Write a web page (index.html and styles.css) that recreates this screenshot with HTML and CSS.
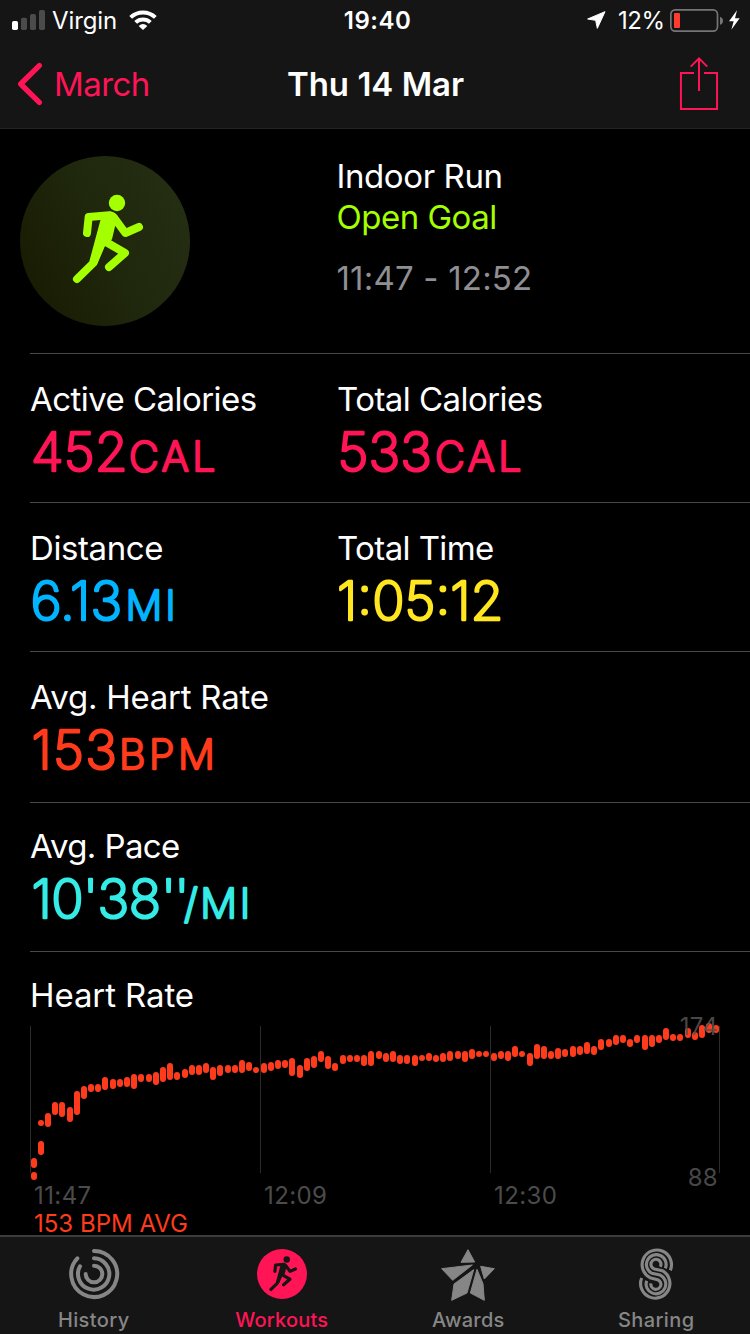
FILE: index.html
```html
<!DOCTYPE html>
<html lang="en">
<head>
<meta charset="utf-8">
<title>Workout</title>
<link rel="stylesheet" href="styles.css">
</head>
<body>
<svg class="defs" width="0" height="0">
  <symbol id="runner" viewBox="60 48 510 510">
    <circle cx="351" cy="189" r="24.5" fill="currentColor"/>
    <path d="M302 238L268 364L290 376L313 320L336 298L346 256L352 234L330 214Z" fill="currentColor"/>
    <path d="M261 279L266 231L328 226Q336 226 343 234L376 279L417 261M231 417L280 369L305 310M318 306L375 339L327 381" fill="none" stroke="currentColor" stroke-width="24" stroke-linecap="round" stroke-linejoin="round"/>
  </symbol>
</svg>
<div class="screen">
  <header class="header">
    <div class="status">
      <div class="status-left">
        <svg class="signal" viewBox="36 30 99 60"><rect x="36" y="63" width="18" height="27" rx="5" fill="#fff"/><g fill="#4b4b4b"><rect x="63" y="53" width="18" height="37" rx="5"/><rect x="90" y="42" width="18" height="48" rx="5"/><rect x="117" y="30" width="18" height="60" rx="5"/></g></svg>
        <span class="carrier">Virgin</span>
        <svg class="wifi" viewBox="387 30 84 60"><path d="M392 52A53.500 53.500 0 0 1 466 52M407 67A32 32 0 0 1 451 67" fill="none" stroke="#fff" stroke-width="12"/><path d="M429 90L416 78Q429 66 442 78Z" fill="#fff"/></svg>
      </div>
      <span class="clock">19:40</span>
      <div class="status-right">
        <svg class="location" viewBox="261 36 57 54"><path d="M263 60L315 38L292 88L287 64Z" fill="#fff" stroke="#fff" stroke-width="3" stroke-linejoin="round"/></svg>
        <span class="percent">12%</span>
        <svg class="battery" viewBox="510 27 210 69"><rect x="512.500" y="29.500" width="140" height="64" rx="13" fill="none" stroke="#757575" stroke-width="5"/><rect x="522" y="39" width="18" height="45" rx="3" fill="#ff3b30"/><path d="M660 50Q669 53 669 62Q669 71 660 74Z" fill="#757575"/><path d="M711 31L687 64H701L694 89L719 55H705Z" fill="#fff"/></svg>
      </div>
    </div>
    <nav class="nav">
      <a class="back"><svg class="chevron" viewBox="51 186 78 132"><path d="M118 197L62 252L118 307" fill="none" stroke="currentColor" stroke-width="16" stroke-linecap="round" stroke-linejoin="round"/></svg><span class="back-text">March</span></a>
      <h1 class="title">Thu 14 Mar</h1>
      <svg class="share" viewBox="540 170 114 160"><path d="M582 218.500H542.500V327H651.500V218.500H612M597 175V273M572 199L597 174L622 199" fill="none" stroke="currentColor" stroke-width="6"/></svg>
    </nav>
  </header>

  <main class="content">
    <section class="hero">
      <div class="badge"><svg class="badge-icon"><use href="#runner"/></svg></div>
      <div class="summary">
        <div class="label indoor">Indoor Run</div>
        <div class="label goal">Open Goal</div>
        <div class="label period">11:47 - 12:52</div>
      </div>
    </section>
    <section class="row">
      <div><div class="label l-active">Active Calories</div><svg class="value pink"><text y="53.500"><tspan x="1">452</tspan><tspan class="unit" x="99">CAL</tspan></text></svg></div>
      <div><div class="label l-total">Total Calories</div><svg class="value pink"><text y="53.500"><tspan x="0.500">533</tspan><tspan class="unit" x="98">CAL</tspan></text></svg></div>
    </section>
    <section class="row">
      <div><div class="label l-distance">Distance</div><svg class="value blue"><text y="53.500"><tspan x="0.500">6.13</tspan><tspan class="unit" x="95.500">MI</tspan></text></svg></div>
      <div><div class="label l-time">Total Time</div><svg class="value yellow"><text y="53.500"><tspan x="0">1:05:12</tspan></text></svg></div>
    </section>
    <section class="row row-tall">
      <div><div class="label l-heart">Avg. Heart Rate</div><svg class="value red"><text y="53.500"><tspan class="rate" x="1.500">153</tspan><tspan class="unit" x="89">BPM</tspan></text></svg></div>
    </section>
    <section class="row row-pace">
      <div><div class="label l-pace">Avg. Pace</div><svg class="value cyan"><text y="53.500"><tspan class="pace" x="1.500">10'38</tspan><tspan class="seconds" x="131">''</tspan><tspan class="unit" x="154">/MI</tspan></text></svg></div>
    </section>
    <section class="chart">
      <div class="label l-chart">Heart Rate</div>
      <div class="plot">
        <svg class="plot-svg" viewBox="0 9 2250 504">
          <path d="M91.500 48V489M781.500 48V489M1471.500 48V489M2158.500 48V489" stroke="#2b2b2b" stroke-width="3"/>
          <path id="bars" fill="none" stroke="#ff3b1c" stroke-width="18" stroke-linecap="round"/>
        </svg>
        <span class="axis max">174</span>
        <span class="axis min">88</span>
      </div>
      <div class="times"><span>11:47</span><span>12:09</span><span>12:30</span></div>
      <div class="average">153 BPM AVG</div>
    </section>
  </main>

  <footer class="tabs">
    <a class="tab"><svg class="tab-icon" viewBox="207 57 150 150"><path d="M282 63A69 69 0 1 1 232 85M282 85A47 47 0 1 1 240 109M282 107A25 25 0 1 1 257 132" fill="none" stroke="currentColor" stroke-width="12" stroke-linecap="round"/></svg><span>History</span></a>
    <a class="tab active"><svg class="tab-icon" viewBox="0 0 150 150"><circle cx="75" cy="75" r="75" fill="currentColor"/><use class="tab-runner" href="#runner" x="-25.500" y="-24" width="201" height="201"/></svg><span>Workouts</span></a>
    <a class="tab tab-awards"><svg class="tab-icon star" viewBox="198 57 162 156"><path d="M279 59L299 96L258 97ZM200 116L292 105L233 151ZM317 109L358 116L328 147ZM296 119L276 189L230 211L237 162ZM306 118L324 161L328 211L286 189Z" fill="currentColor" stroke="currentColor" stroke-width="3" stroke-linejoin="round"/></svg><span>Awards</span></a>
    <a class="tab"><svg class="tab-icon" viewBox="768 57 150 150"><path d="M886 121A44 44 0 1 0 825 143L848 149A15 15 0 1 1 828 160M871 115A29.500 29.500 0 1 0 831 130L855 135A29.500 29.500 0 1 1 815 152M856 110A15 15 0 1 0 838 117L862 122A44 44 0 1 1 800 144" fill="none" stroke="currentColor" stroke-width="9.500"/></svg><span>Sharing</span></a>
  </footer>
</div>
<script src="chart.js"></script>
</body>
</html>
```
FILE: styles.css
```css
* { box-sizing: border-box; }
body { margin: 0; background: #000; font-family: Inter, "Liberation Sans", sans-serif; color: #fff; }
.defs { position: absolute; }
.screen { width: 750px; height: 1334px; display: flex; flex-direction: column; overflow: hidden; }
svg { display: block; flex: none; overflow: visible; }

.header { height: 129px; flex: none; background: #151515; border-bottom: 1px solid #242424; }
.status { height: 40px; display: grid; grid-template-columns: 1fr auto 1fr; align-items: center; font-size: 24px; line-height: 40px; }
.status span { padding-top: 2px; line-height: 38px; }
.status-left { display: flex; align-items: center; padding-left: 12px; }
.signal { width: 33px; height: 20px; }
.carrier { width: 76px; padding-left: 7px; letter-spacing: -.1px; }
.wifi { width: 28px; height: 20px; margin-left: 8px; }
.clock { font-weight: 600; letter-spacing: .5px; margin-left: 5px; }
.status-right { display: flex; align-items: center; justify-content: flex-end; padding-right: 10px; }
.location { width: 19px; height: 18px; margin-right: 12px; }
.percent { width: 52px; letter-spacing: -.4px; }
.battery { width: 70px; height: 23px; }
.nav { height: 88px; display: grid; grid-template-columns: 1fr auto 1fr; align-items: center; padding: 0 32px 0 17px; font-size: 33px; line-height: 88px; }
.back { display: flex; align-items: center; color: #ff1455; gap: 11px; letter-spacing: -.6px; }
.chevron { width: 26px; height: 44px; }
.title { margin: 0 0 0 16px; font-size: 33px; font-weight: 600; }
.share { width: 38px; height: 53px; margin-bottom: 2px; color: #ff1455; justify-self: end; }

.content { height: 1106px; flex: none; }
.hero { height: 225px; display: grid; grid-template-columns: 316.5px 1fr; padding: 27px 0 0 20px; position: relative; }
.hero::after { content: ""; position: absolute; left: 30px; right: 0; bottom: 0; height: 1px; background: #484848; }
.badge { width: 170px; height: 170px; border-radius: 50%; background: linear-gradient(65deg, #181b02 8%, #1f270d 50%, #252f14 95%); color: #a4ff00; }
.badge-icon { width: 170px; height: 170px; }
.label { font-size: 33px; line-height: 36px; white-space: nowrap; }
.summary .label { line-height: 41px; }
.indoor { letter-spacing: -.4px; }
.goal { color: #a4ff00; letter-spacing: -.5px; }
.summary .period { color: #8e8e93; margin-top: 20px; letter-spacing: .2px; }
.row { height: 149px; margin-left: 30px; padding-top: 27px; border-bottom: 1px solid #484848; display: grid; grid-template-columns: 307px 1fr; }
.l-active, .l-total { letter-spacing: -.55px; }
.l-distance { letter-spacing: -.4px; }
.l-time, .l-pace { letter-spacing: -.6px; }
.l-heart { letter-spacing: -.25px; }
.row-tall { height: 151px; }
.row-pace { padding-top: 25px; }
.value { width: 280px; height: 60px; font-size: 53.5px; font-weight: 200; fill: currentColor; stroke: currentColor; stroke-width: 2.6px; stroke-linejoin: round; }
.unit { font-size: 41px; letter-spacing: 3.6px; }
.rate { letter-spacing: 1.2px; }
.pace { letter-spacing: -.6px; }
.pace + .seconds + .unit { letter-spacing: 2.6px; }
.blue .unit { letter-spacing: 3px; }
.seconds { letter-spacing: -2px; }
.pink { color: #ff1455; }
.blue { color: #00b4ff; }
.yellow { color: #ffe620; }
.red { color: #ff3b1c; }
.cyan { color: #35ebe6; }

.chart { padding-top: 25px; }
.l-chart { padding-left: 30px; letter-spacing: -.1px; }
.plot { position: relative; height: 168px; }
.plot-svg { width: 750px; height: 168px; }
.axis { position: absolute; right: 32px; font-size: 24px; line-height: 28px; color: rgba(82, 82, 82, .88); letter-spacing: .3px; }
.max { top: 0; }
.min { top: 151px; }
.times { display: grid; grid-template-columns: 230px 230px 1fr; padding: 1px 0 0 34px; font-size: 24px; line-height: 28px; letter-spacing: .4px; color: #4b4b4b; }
.average { margin-top: 3px; padding-left: 34px; font-size: 24px; line-height: 22px; color: #ff3b1c; white-space: nowrap; }

.tabs { height: 99px; flex: none; position: relative; background: #151515; border-top: 2px solid #3c3c3d; display: grid; grid-template-columns: repeat(4, 1fr); }
.tab { display: flex; flex-direction: column; align-items: center; padding-top: 12px; color: #868686; font-size: 20px; font-weight: 500; line-height: 24px; gap: 9px; letter-spacing: .4px; }
.tab-icon { width: 50px; height: 50px; }
.star { width: 54px; height: 52px; margin-bottom: -2px; }
.tab-awards { padding-right: 1px; letter-spacing: .2px; }
.active { color: #ff1455; padding-left: 1px; letter-spacing: .2px; }
.tab-runner { color: #151515; }
```
FILE: chart.js
```js
// Heart-rate ranges: [x, top, bottom] in plot units.
const ranges = [
[102,444,474],[102,486,510],[123,330,348],[123,393,435],[144,309,351],[165,276,315],[186,276,321],[210,291,336],[231,243,315],[252,228,267],[273,222,246],[294,222,246],[315,201,240],[339,207,237],[360,207,231],[381,201,231],[402,192,237],[423,192,216],[447,192,216],[468,186,225],[489,171,216],[510,159,210],[531,186,210],[555,177,204],[576,165,195],[597,165,195],[618,159,189],[639,171,210],[660,165,198],[684,165,189],[705,165,189],[726,150,189],[747,156,183],
[768,171,189],[792,159,189],[813,156,183],[834,150,177],[855,150,174],[876,144,198],[900,165,204],[921,144,183],[942,138,174],[963,123,156],[984,138,177],[1005,159,183],[1029,135,162],[1050,135,156],[1071,135,156],[1092,135,168],[1113,123,168],[1137,123,147],[1158,129,156],[1179,123,156],[1200,135,162],[1221,135,162],[1245,135,168],[1266,135,153],[1287,129,153],[1308,135,156],[1329,129,156],[1350,123,153],[1374,123,147],[1395,123,156],[1416,117,147],[1437,123,141],[1458,123,141],[1482,129,153],
[1503,123,147],[1524,123,153],[1545,108,141],[1566,123,141],[1590,129,168],[1611,102,147],[1632,108,147],[1653,123,147],[1674,114,147],[1695,117,141],[1719,108,141],[1740,108,135],[1761,96,132],[1782,108,135],[1803,87,120],[1827,87,111],[1848,75,105],[1869,75,99],[1890,87,111],[1911,75,99],[1935,75,120],[1956,75,111],[1977,75,99],[1998,54,90],[2019,72,93],[2040,72,93],[2064,54,84],[2085,66,90],[2106,45,84],[2127,39,69],[2148,45,69]
];
document.getElementById("bars").setAttribute("d",
  ranges.map(([x, top, bottom]) => `M${x} ${top + 9}V${bottom - 9}`).join(""));
```
